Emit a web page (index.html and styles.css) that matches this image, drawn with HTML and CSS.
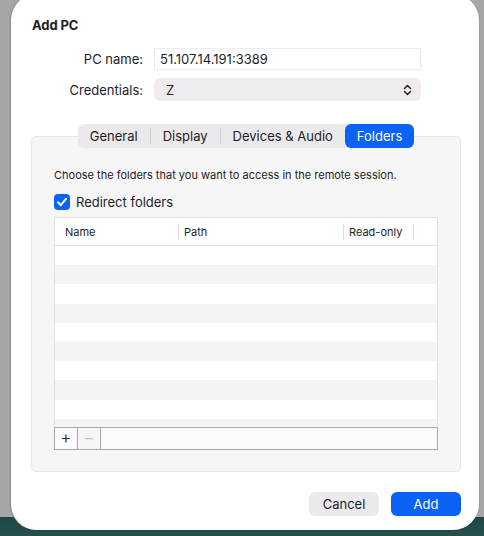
FILE: index.html
```html
<!DOCTYPE html>
<html lang="en">
<head>
  <meta charset="UTF-8" />
  <meta name="viewport" content="width=device-width,initial-scale=1.0" />
  <title>Add PC</title>
  <link rel="stylesheet" href="styles.css">
</head>
<body>

  <!-- Sheet -->
  <div class="sheet">
    <h1 class="title">Add PC</h1>

    <div class="form">
      <label class="form-label" for="pc-name">PC name:</label>
      <input id="pc-name" class="text-field" type="text" value="51.107.14.191:3389">

      <span class="form-label">Credentials:</span>
      <div class="popup">
        <span>Z</span>
        <svg class="popup-arrows" width="9" height="12" viewBox="0 0 9 12">
          <path d="M1.5 4.5 L4.5 1.5 L7.5 4.5 M1.5 7.5 L4.5 10.5 L7.5 7.5" fill="none" stroke="#222" stroke-width="1.5" stroke-linecap="round" stroke-linejoin="round"/>
        </svg>
      </div>
    </div>

    <!-- Tabs -->
    <div class="tabs">
      <div class="segmented">
        <span class="seg">General</span>
        <span class="seg-sep"></span>
        <span class="seg">Display</span>
        <span class="seg-sep"></span>
        <span class="seg">Devices &amp; Audio</span>
        <span class="seg active">Folders</span>
      </div>

      <div class="tab-box">
        <p class="hint">Choose the folders that you want to access in the remote session.</p>

        <label class="check-row">
          <span class="checkbox">
            <svg width="16" height="16" viewBox="0 0 16 16">
              <path d="M4 8.3 L6.8 11.2 L12 4.8" fill="none" stroke="#fff" stroke-width="2" stroke-linecap="round" stroke-linejoin="round"/>
            </svg>
          </span>
          Redirect folders
        </label>

        <div class="table">
          <div class="thead">
            <span class="th th-name">Name</span>
            <span class="th th-path">Path</span>
            <span class="th th-ro">Read-only</span>
            <span class="th th-rest"></span>
          </div>
          <div class="tbody">
            <div class="row"></div>
            <div class="row"></div>
            <div class="row"></div>
            <div class="row"></div>
            <div class="row"></div>
            <div class="row"></div>
            <div class="row"></div>
            <div class="row"></div>
            <div class="row"></div>
            <div class="row"></div>
          </div>
          <div class="table-bar">
            <span class="bar-btn">+</span>
            <span class="bar-btn disabled">&minus;</span>
            <span class="bar-fill"></span>
          </div>
        </div>
      </div>
    </div>

    <div class="actions">
      <button class="btn">Cancel</button>
      <button class="btn primary">Add</button>
    </div>
  </div>

</body>
</html>
```

FILE: styles.css
```css
* { margin:0; padding:0; box-sizing:border-box; }
html, body { height:100%; overflow:hidden; }
body {
  font-family: Inter, "Noto Sans", sans-serif;
  font-size: 13px;
  color: #1d1d1f;
  background: linear-gradient(180deg, #a6a6a6 0, #a6a6a6 517px, #1f4646 517px, #24504c 536px);
}

/* Sheet window */
.sheet {
  width: 468px;
  height: 536px;
  margin: -6px 0 0 11px;
  background: #fff;
  border-radius: 26px;
  box-shadow: -1px 0 0 #8a8a8a, 0 0 2px rgba(0,0,0,0.25);
  padding: 23px 17px 0 21px;
  display: flex;
  flex-direction: column;
}
.title { font-size:13px; font-weight:700; line-height:16px; letter-spacing:-0.1px; }

/* Name / credentials rows */
.form {
  display: grid;
  grid-template-columns: 111px 267px;
  column-gap: 11px;
  row-gap: 8px;
  margin-top: 15px;
  align-items: center;
}
.form-label { text-align:right; font-size:13px; }
.text-field {
  height: 22px;
  border: 1px solid #ececec;
  border-radius: 0;
  padding: 0 5px;
  font: inherit;
  color: #1d1d1f;
  outline: none;
  background: #fff;
}
.popup {
  height: 23px;
  background: #efebef;
  border-radius: 6px;
  display: flex;
  align-items: center;
  justify-content: space-between;
  padding: 0 9px 0 12px;
}
.popup-arrows { display:block; }

/* Tab view */
.tabs { margin-top: 23px; display:flex; flex-direction:column; align-items:center; width:430px; margin-left:-1px; }
.segmented {
  display: flex;
  align-items: center;
  height: 24px;
  background: #ece9ec;
  border-radius: 6px;
  margin-bottom: -12px;
  position: relative;
  z-index: 1;
}
.seg { padding: 0 12px; line-height:24px; }
.seg-sep { width:1px; height:16px; background:#d2d0d2; }
.seg.active { background:#0b63f6; color:#fff; border-radius:6px; padding:0 12px; }

.tab-box {
  align-self: stretch;
  background: #f6f6f6;
  border: 1px solid #e6e6e6;
  border-radius: 5px;
  padding: 31px 22px 21px 22px;
}
.hint { font-size:11px; line-height:14px; }
.check-row { display:flex; align-items:center; gap:6px; margin-top:12px; height:16px; }
.checkbox { width:16px; height:16px; background:#0b63f6; border-radius:4px; display:block; }
.checkbox svg { display:block; }

/* Folder table */
.table { margin-top: 7px; background:#fff; border:1px solid #e2e2e2; border-bottom:none; }
.thead { display:flex; height:28px; align-items:center; border-bottom:1px solid #e2e2e2; font-size:11px; }
.th { line-height:16px; padding-left:10px; border-right:1px solid #dedede; }
.th-name { width:124px; }
.th-path { width:165px; padding-left:5px; }
.th-ro { width:70px; padding-left:5px; }
.th-rest { border-right:none; }
.tbody { height:181px; overflow:hidden; }
.row { height:19.2px; }
.row:nth-child(even) { background:#f6f3f6; }
.table-bar { display:flex; height:23px; border:1px solid #a9a9a9; margin:0 -1px; background:#fbf9fb; }
.bar-btn { width:23px; text-align:center; font-size:18px; line-height:20px; border-right:1px solid #a9a9a9; color:#222; font-weight:300; }
.bar-btn.disabled { color:#c4c4c4; background:#f5f5f5; }
.bar-fill { flex:1; }

/* Buttons */
.actions { display:flex; justify-content:flex-end; gap:12px; margin-top:20px; width:429px; }
.btn {
  width: 70px; height: 24px;
  border: none; border-radius: 6px;
  background: #ece9ec;
  font: inherit; color: #1d1d1f;
}
.btn.primary { background:#0b63f6; color:#fff; }
```
